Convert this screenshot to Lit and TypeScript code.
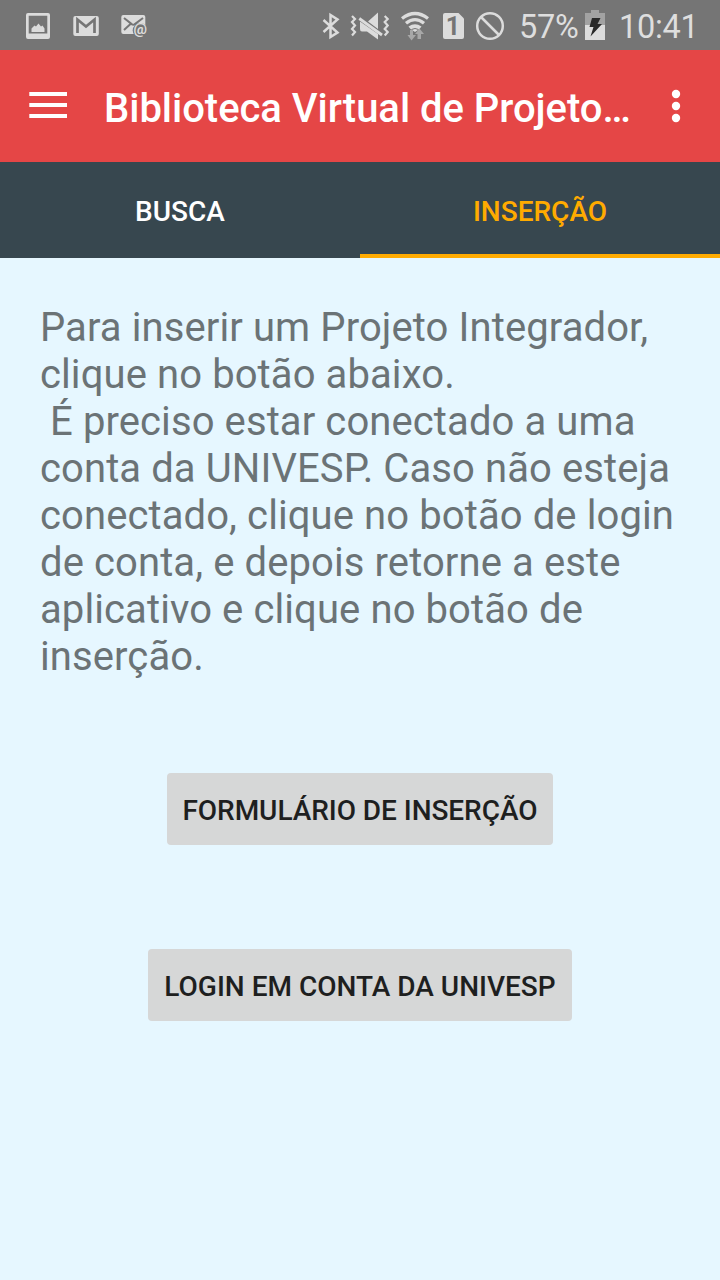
import { LitElement, html, css } from "lit";
import { customElement, state } from "lit/decorators.js";

@customElement("status-bar")
class StatusBar extends LitElement {
  static styles = css`
    :host { display: flex; height: 50px; background: #757575; color: #dedede; font-size: 32.5px; line-height: 54px; white-space: nowrap; letter-spacing: -0.3px; }
    svg { display: block; height: 50px; flex: none; fill: #dcdcdc; letter-spacing: 0; }
    .left, .right { display: flex; }
    .left { padding-left: 20px; gap: 12px; flex: 1; }
    .level { width: 66px; box-sizing: border-box; padding-left: 9px; }
    .clock { width: 110px; box-sizing: border-box; padding-left: 9px; }
    .at { font: 700 15px Roboto, sans-serif; }
    .sim { font: 700 25px Roboto, sans-serif; fill: #757575; }
  `;
  render() {
    return html`
      <div class="left">
        <svg width="36" viewBox="20 0 36 50"><path fill-rule="evenodd" d="M28 13H48Q50 13 50 15V37Q50 39 48 39H28Q26 39 26 37V15Q26 13 28 13ZM28.7 15.7V33.6H47.3V15.7Z"/><path d="M31.5 32V28.5L34.5 25.5L36 26.5L38.5 23.5L41 26.5L42.5 25.5L44.5 28.5V32Z"/></svg>
        <svg width="36" viewBox="68 0 36 50"><rect x="73.3" y="16" width="25.5" height="20" rx="2"/><path d="M77.5 33V19.5L86 26.5L94.5 19.5V33" fill="none" stroke="#757575" stroke-width="2.7"/></svg>
        <svg width="36" viewBox="116 0 36 50"><rect x="121.3" y="15" width="24" height="19" rx="2"/><path d="M124 18L132 24.3Q133.3 25 134.5 24.3L143 18M124 30L130.5 24M143 30L136 24" fill="none" stroke="#757575" stroke-width="2"/><circle cx="140.2" cy="30.5" r="7.5" fill="#757575"/><text class="at" x="133.5" y="34" textLength="13.5" lengthAdjust="spacingAndGlyphs">@</text></svg>
      </div>
      <div class="right">
        <svg width="30" viewBox="316 0 30 50"><path d="M323.5 20L337.5 32.5L330.5 37V15L337.5 19.5L323.5 32" fill="none" stroke="#dcdcdc" stroke-width="2.5"/></svg>
        <svg width="50" viewBox="346 0 50 50"><path d="M352 16L355 19L352 22L355 25.5L352 29L355 32L352 35.5M384.7 16L387.7 19L384.7 22L387.7 25.5L384.7 29L387.7 32L384.7 35.5" fill="none" stroke="#dcdcdc" stroke-width="2.2"/><path d="M378 12.5V29L368 21.5ZM360 21.5L378 34V39.5L367 31.5H362Q360 31.5 360 29Z"/><path d="M359.3 18.5L382 35" stroke="#dcdcdc" stroke-width="2.8"/></svg>
        <svg width="40" viewBox="396 0 40 50"><path d="M402 18.5Q415 8.5 428 18.5M406 23.3Q415 16 424 23.3" fill="none" stroke="#dcdcdc" stroke-width="3.3"/><path d="M408.5 26.5Q415 22 421.5 26.5L419.5 29L415 32L410.5 29Z"/><path d="M411.5 29.5Q415 27.5 418.5 29.5" fill="none" stroke="#757575"/><path fill="#a8a8a8" d="M410 30H413V35H416L411.5 40.5L407.5 35H410ZM417.5 39H421V34H424L419.5 28.5L415 34H417.5Z"/></svg>
        <svg width="34" viewBox="436 0 34 50"><path d="M445 13H458.5L464 18.5V37Q464 39 462 39H445Q443 39 443 37V15Q443 13 445 13Z"/><text class="sim" x="453" y="34.7" text-anchor="middle">1</text></svg>
        <svg width="40" viewBox="470 0 40 50"><g fill="none" stroke="#dcdcdc" stroke-width="2.5"><circle cx="490" cy="26" r="12.8"/><path d="M481 17L499 35"/></g></svg>
        <span class="level">57%</span>
        <svg width="34" viewBox="576 0 34 50"><path fill="#a2a2a2" d="M591 10H599V13H605V25H585V13H591Z"/><path d="M585 25H605V40H585Z"/><path fill="#292929" d="M592 18H600.5L597.5 24H602L590.5 36.5L593.5 27H589.5Z"/></svg>
        <span class="clock">10:41</span>
      </div>`;
  }
}

@customElement("app-root")
class AppRoot extends LitElement {
  @state() tab = 1;
  static styles = css`
    :host { display: flex; flex-direction: column; height: 1280px; background: #e6f7ff; font-family: Roboto, sans-serif; overflow: hidden; }
    .bar { display: flex; align-items: center; height: 112px; flex: none; background: #e54646; color: #fff; }
    .menu { width: 104px; flex: none; height: 112px; display: block; }
    .title { margin: 0; width: 527px; flex: none; font-size: 40px; font-weight: 500; line-height: 47px; padding-top: 4px; white-space: nowrap; letter-spacing: -0.03px; }
    .more { width: 89px; height: 112px; display: block; }
    .tabs { display: flex; height: 96px; flex: none; background: #37474f; }
    .tab { all: unset; box-sizing: border-box; flex: 1; height: 96px; text-align: center; color: #fff; font-size: 28px; font-weight: 500; line-height: 94px; padding-top: 3px; cursor: pointer; }
    .tab.active { color: #ffab00; box-shadow: inset 0 -4px #ffab00; }
    .content { display: flex; flex-direction: column; align-items: center; padding: 46px 40px 0; }
    .message { margin: 0; align-self: stretch; font-size: 40px; line-height: 47px; letter-spacing: 0.1px; color: #6b7376; white-space: pre; }
    .action { all: unset; box-sizing: border-box; height: 72px; border-radius: 4px; background: #d6d7d7; color: #1e1f1f; font-size: 28px; font-weight: 500; line-height: 76px; text-align: center; white-space: nowrap; cursor: pointer; }
    .form { width: 386px; margin-top: 93px; letter-spacing: -0.05px; }
    .login { width: 424px; margin-top: 104px; }
  `;
  render() {
    const lines = [
      "Para inserir um Projeto Integrador,", "clique no botão abaixo.", " É preciso estar conectado a uma",
      "conta da UNIVESP. Caso não esteja", "conectado, clique no botão de login", "de conta, e depois retorne a este",
      "aplicativo e clique no botão de", "inserção.",
    ];
    return html`
      <status-bar></status-bar>
      <header class="bar">
        <svg class="menu" viewBox="0 0 104 112" fill="#fff"><path d="M29.3 42H67V46H29.3ZM29.3 53H67V57H29.3ZM29.3 64H67V68H29.3Z"/></svg>
        <h1 class="title">Biblioteca Virtual de Projeto…</h1>
        <svg class="more" viewBox="0 0 89 112" fill="#fff"><circle cx="45" cy="44" r="4.2"/><circle cx="45" cy="56" r="4.2"/><circle cx="45" cy="68" r="4.2"/></svg>
      </header>
      <nav class="tabs">
        ${["BUSCA", "INSERÇÃO"].map((label, i) => html`<button class="tab ${this.tab === i ? "active" : ""}" @click=${() => (this.tab = i)}>${label}</button>`)}
      </nav>
      <main class="content">
        <p class="message">${lines.join("\n")}</p>
        <button class="action form">FORMULÁRIO DE INSERÇÃO</button>
        <button class="action login">LOGIN EM CONTA DA UNIVESP</button>
      </main>`;
  }
}
